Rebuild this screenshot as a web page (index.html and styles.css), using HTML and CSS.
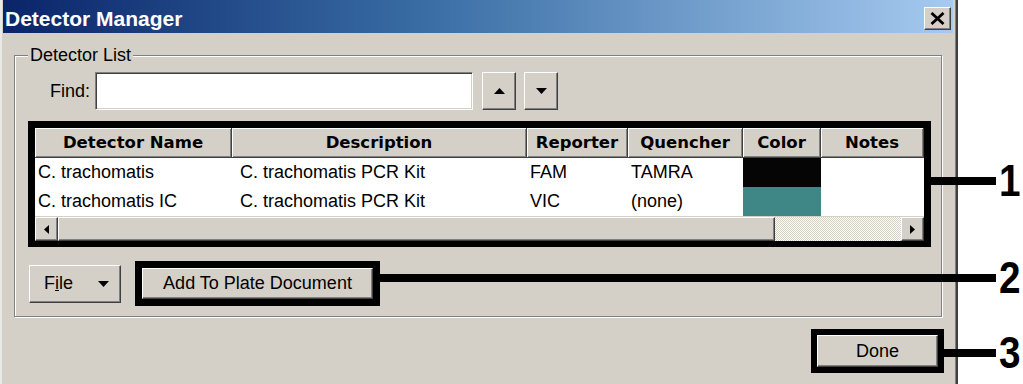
FILE: index.html
```html
<!DOCTYPE html>
<html>
  <head>
    <link rel="stylesheet" href="styles.css">
  </head>
  <body>
    <div class="screen">
      <div class="window">
        <div class="titlebar">
          <span class="title">Detector Manager</span>
          <button class="btn close-btn">
            <svg width="15" height="13" viewBox="0 0 15 13"><path d="M1.5 1 L13.5 12 M13.5 1 L1.5 12" stroke="#000" stroke-width="2.8"/></svg>
          </button>
        </div>

        <div class="group">
          <div class="group-title">Detector List</div>
          <div class="find-row">
            <span class="find-label">Find:</span>
            <div class="field"></div>
            <button class="btn arrow-btn">
              <svg width="11" height="6" viewBox="0 0 11 6"><path d="M0 6 L5.5 0 L11 6 Z" fill="#000"/></svg>
            </button>
            <button class="btn arrow-btn">
              <svg width="11" height="6" viewBox="0 0 11 6"><path d="M0 0 L11 0 L5.5 6 Z" fill="#000"/></svg>
            </button>
          </div>

          <div class="mark list-mark">
            <div class="list">
              <div class="list-head">
                <div class="th">Detector Name</div>
                <div class="th">Description</div>
                <div class="th">Reporter</div>
                <div class="th">Quencher</div>
                <div class="th">Color</div>
                <div class="th">Notes</div>
              </div>
              <div class="list-row">
                <div class="td">C. trachomatis</div>
                <div class="td td-desc">C. trachomatis PCR Kit</div>
                <div class="td">FAM</div>
                <div class="td">TAMRA</div>
                <div class="td swatch swatch-black"></div>
                <div class="td"></div>
              </div>
              <div class="list-row">
                <div class="td">C. trachomatis IC</div>
                <div class="td td-desc">C. trachomatis PCR Kit</div>
                <div class="td">VIC</div>
                <div class="td">(none)</div>
                <div class="td swatch swatch-teal"></div>
                <div class="td"></div>
              </div>
              <div class="hscroll">
                <div class="btn sb-btn">
                  <svg width="5" height="9" viewBox="0 0 5 9"><path d="M5 0 L0 4.5 L5 9 Z" fill="#000"/></svg>
                </div>
                <div class="btn sb-thumb"></div>
                <div class="sb-track"></div>
                <div class="btn sb-btn">
                  <svg width="5" height="9" viewBox="0 0 5 9"><path d="M0 0 L5 4.5 L0 9 Z" fill="#000"/></svg>
                </div>
              </div>
            </div>
          </div>

          <div class="action-row">
            <button class="btn file-btn">
              <span>F<u>i</u>le</span>
              <svg width="11" height="6" viewBox="0 0 11 6"><path d="M0 0 L11 0 L5.5 6 Z" fill="#000"/></svg>
            </button>
            <div class="mark add-mark">
              <button class="btn add-btn">Add To Plate Document</button>
            </div>
          </div>
        </div>

        <div class="footer">
          <div class="mark done-mark">
            <button class="btn done-btn">Done</button>
          </div>
        </div>
      </div>

      <!-- numbered callouts drawn over the dialog -->
      <div class="callout callout-1"><span class="lead"></span><span class="num">1</span></div>
      <div class="callout callout-2"><span class="lead"></span><span class="num">2</span></div>
      <div class="callout callout-3"><span class="lead"></span><span class="num">3</span></div>
    </div>
  </body>
</html>
```

FILE: styles.css
```css
body {
  margin: 0;
  background: #fff;
  font-family: "Liberation Sans", Arial, sans-serif;
  font-size: 18px;
  color: #000;
}
.screen {
  position: relative;
  width: 1023px;
  height: 384px;
  overflow: hidden;
}
.window {
  width: 958px;
  height: 384px;
  box-sizing: border-box;
  background: #d4d0c8;
  border-left: 2px solid #ebe9e4;
  border-right: 2px solid #404040;
  padding: 0 3px 0 1px;
  box-shadow: inset -1px 0 #808080;
  display: flex;
  flex-direction: column;
}
button {
  font: inherit;
  color: inherit;
  margin: 0;
  padding: 0;
}
.btn {
  background: #d4d0c8;
  border: 1px solid;
  border-color: #fff #404040 #404040 #fff;
  box-shadow: inset -1px -1px #808080;
  box-sizing: border-box;
  display: flex;
  align-items: center;
  justify-content: center;
}

.titlebar {
  height: 33px;
  box-sizing: border-box;
  padding: 4px 2px 0 2px;
  display: flex;
  align-items: center;
  justify-content: space-between;
  background: linear-gradient(to right, #0a246a 0%, #3a6ea5 45%, #a6caf0 100%);
}
.title {
  color: #fff;
  font-family: "Liberation Sans", Arial, sans-serif;
  font-weight: bold;
  font-size: 21px;
}
.close-btn {
  width: 27px;
  height: 23px;
}

.group {
  margin: 22px 0 0 11px;
  width: 928px;
  height: 262px;
  box-sizing: border-box;
  border: 1px solid #808080;
  box-shadow: 1px 1px 0 #fff, inset 1px 1px 0 #fff;
  display: flex;
  flex-direction: column;
  align-items: flex-start;
}
.group-title {
  margin: -11px 0 0 13px;
  padding: 0 2px;
  line-height: 20px;
  background: #d4d0c8;
}
.find-row {
  margin: 7px 0 0 35px;
  display: flex;
  align-items: center;
}
.find-label {
  width: 40px;
  margin-right: 5px;
}
.field {
  width: 378px;
  height: 38px;
  box-sizing: border-box;
  background: #fff;
  border: 1px solid;
  border-color: #808080 #fff #fff #808080;
  box-shadow: inset 1px 1px #404040, inset -1px -1px #d4d0c8;
}
.arrow-btn {
  width: 34px;
  height: 38px;
  margin-left: 8px;
}
.arrow-btn:first-of-type {
  margin-left: 9px;
}

.mark {
  border: 7px solid #000;
  background: #000;
}
.list-mark {
  margin: 11px 0 0 13px;
}
.list {
  width: 889px;
  height: 112px;
  background: #fff;
  display: flex;
  flex-direction: column;
}
.list-head,
.list-row {
  display: grid;
  grid-template-columns: 197px 295px 101px 115px 78px 103px;
}
.th {
  height: 30px;
  box-sizing: border-box;
  background: #d4d0c8;
  border-right: 1px solid #404040;
  border-bottom: 1px solid #404040;
  box-shadow: inset 1px 1px #fff, inset -1px -1px #808080;
  font-family: "DejaVu Sans", sans-serif;
  font-weight: bold;
  font-size: 16.5px;
  display: flex;
  align-items: center;
  justify-content: center;
}
.td {
  height: 29px;
  padding-left: 3px;
  display: flex;
  align-items: center;
  white-space: nowrap;
}
.td-desc {
  padding-left: 8px;
}
.swatch {
  padding: 0;
}
.swatch-black {
  background: #050505;
}
.swatch-teal {
  background: #3f8686;
}
.hscroll {
  margin-top: auto;
  height: 24px;
  display: flex;
  border-top: 1px solid #d4d0c8;
}
.sb-btn {
  width: 23px;
  height: 24px;
}
.sb-thumb {
  width: 717px;
  height: 24px;
}
.sb-track {
  flex: 1;
  background: repeating-conic-gradient(#fff 0 25%, #d4d0c8 0 50%) 0 0 / 2px 2px;
}

.action-row {
  margin: 14px 0 0 14px;
  display: flex;
  align-items: center;
  gap: 14px;
}
.file-btn {
  width: 92px;
  height: 38px;
  padding: 0 11px 0 14px;
  justify-content: space-between;
}
.add-btn {
  width: 231px;
  height: 31px;
}

.footer {
  margin-top: 12px;
  display: flex;
  justify-content: flex-end;
  padding-right: 9px;
}
.done-mark {
  border-width: 6px;
}
.done-btn {
  width: 121px;
  height: 32px;
}

.callout {
  position: absolute;
  display: flex;
  align-items: center;
  height: 44px;
}
.lead {
  height: 8px;
  background: #000;
}
.num {
  display: inline-block;
  margin-left: 3px;
  font-family: "Liberation Sans", Arial, sans-serif;
  font-weight: bold;
  font-size: 44px;
  line-height: 44px;
  transform: scaleX(0.88);
  transform-origin: left center;
}
.callout-1 {
  top: 159px;
  left: 931px;
}
.callout-1 .lead {
  width: 65px;
}
.callout-2 {
  top: 256px;
  left: 380px;
}
.callout-2 .lead {
  width: 616px;
}
.callout-3 {
  top: 331px;
  left: 944px;
}
.callout-3 .lead {
  width: 52px;
}
```
